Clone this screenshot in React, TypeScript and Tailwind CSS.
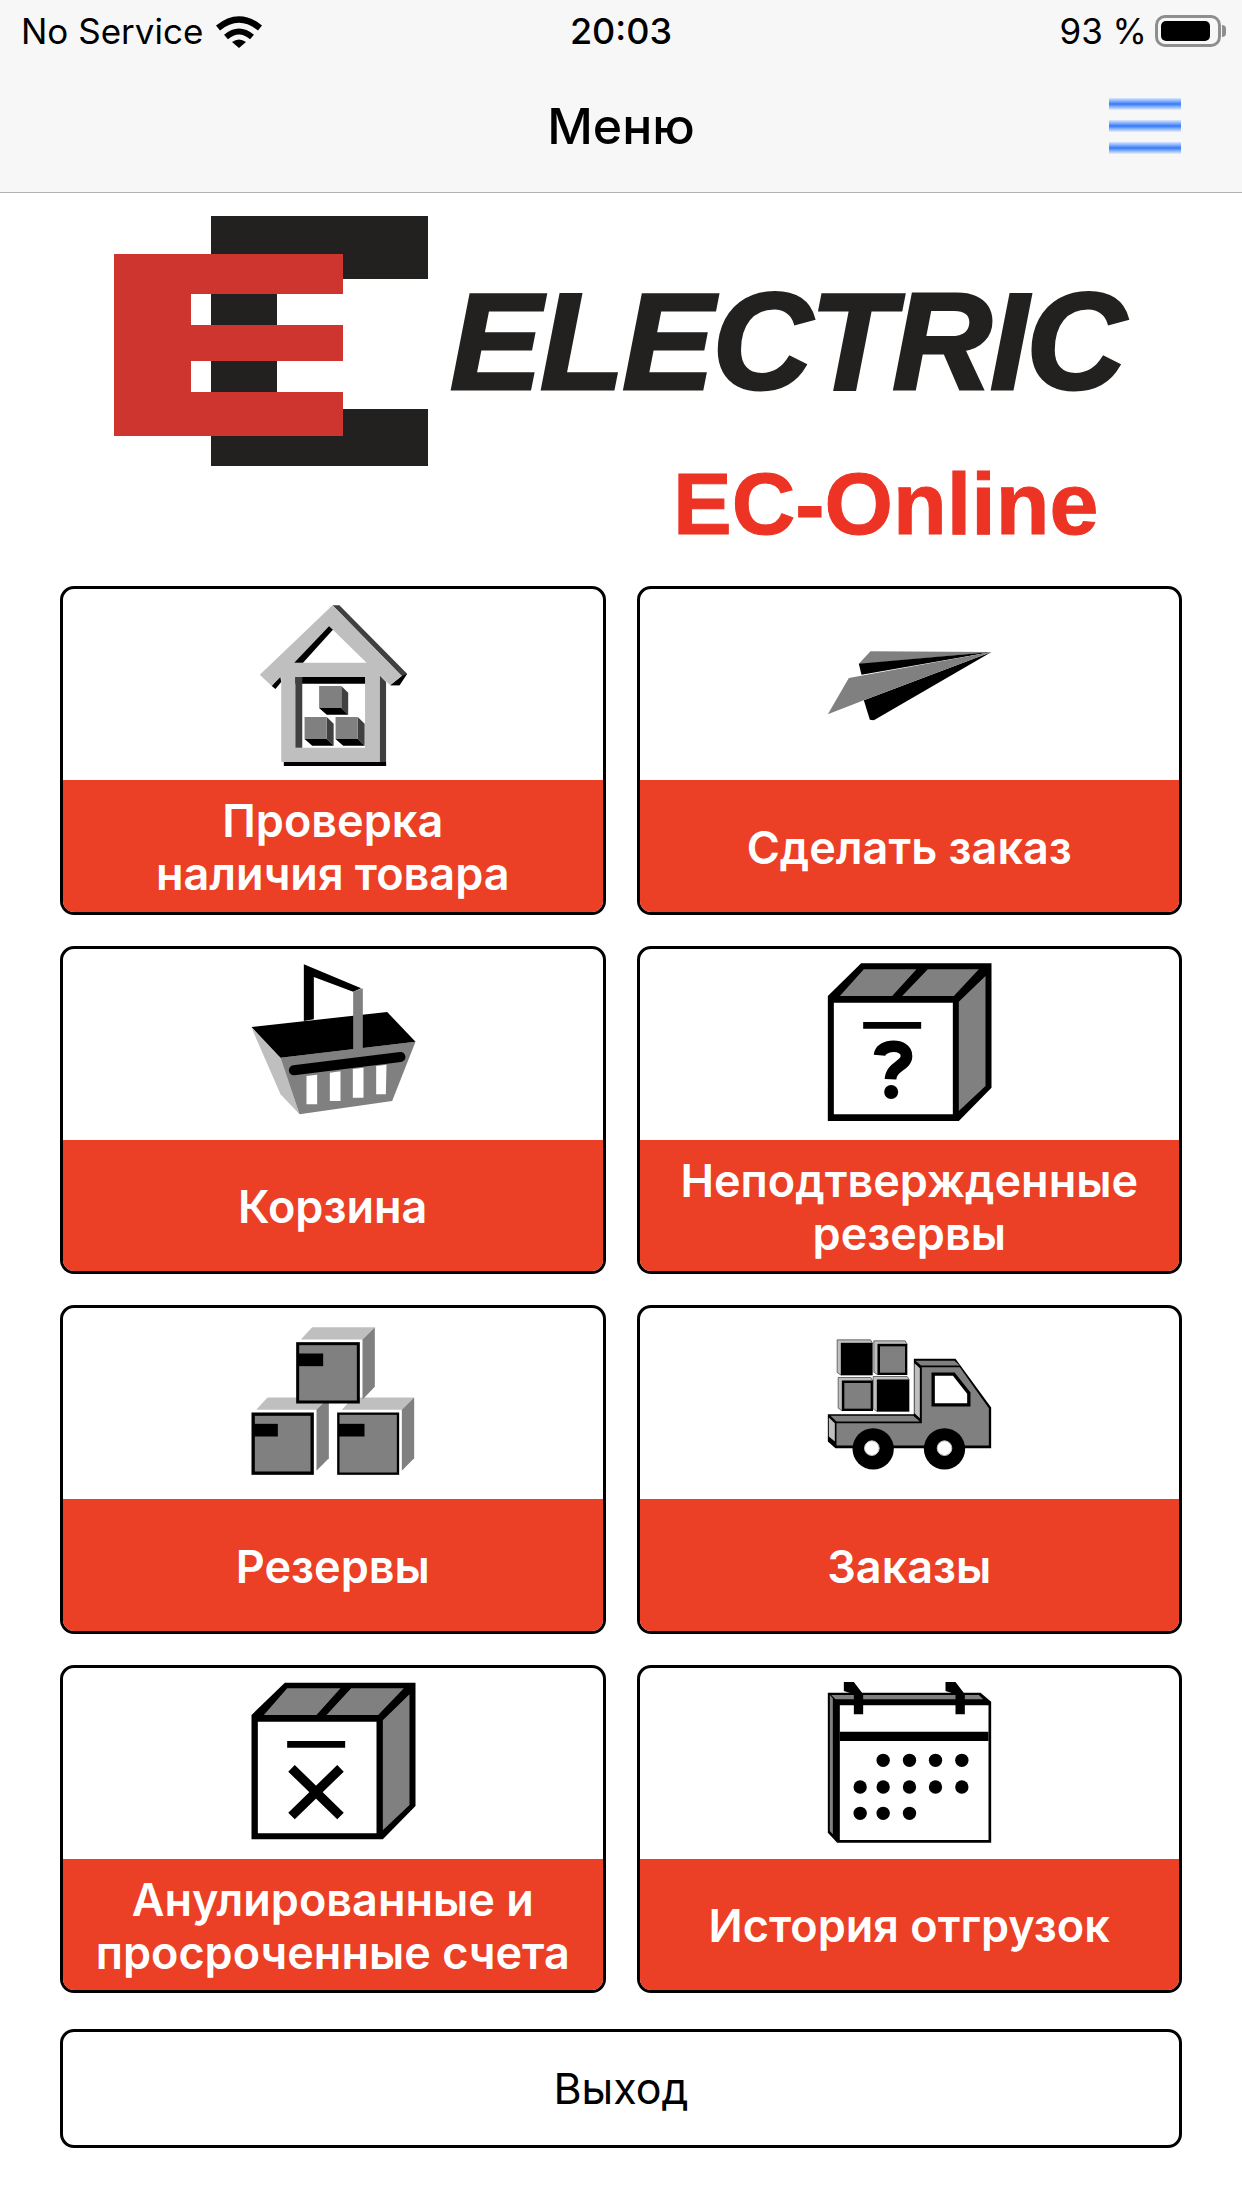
import type { ReactNode } from "react";

const GRAY = "#808080";
const LIGHT = "#bfbfbf";
const DARK = "#404040";

function Wifi() {
  return (
    <svg viewBox="0 0 46 34" className="w-[46px] h-[34px] ml-[13px]">
      <path d="M2 14 Q23 -3 44 14" fill="none" stroke="#000" strokeWidth="6.5" />
      <path d="M10 23 Q23 12 36 23" fill="none" stroke="#000" strokeWidth="6" />
      <path d="M16 28 Q23 23 30 28 L23 34 Z" fill="#000" />
    </svg>
  );
}

function Battery() {
  return (
    <div className="flex items-center ml-[8px]">
      <div className="w-[66px] h-[32px] rounded-[10px] border-[3px] border-[#8e8e8e] p-[3px]">
        <div className="h-full w-[90%] rounded-[5px] bg-black" />
      </div>
      <div className="w-[4px] h-[12px] ml-[1px] rounded-r-full bg-[#8e8e8e]" />
    </div>
  );
}

function LogoMark() {
  return (
    <svg viewBox="114 216 314 250" className="w-[314px] h-[250px] shrink-0">
      <path d="M211 216H428V279H343V294H277V409H428V466H211Z" fill="#22211f" />
      <path d="M114 254H343V294H191V325H343V361H191V392H343V436H114Z" fill="#ce352f" />
    </svg>
  );
}

function IconBox({ viewBox, stretch, children }: { viewBox: string; stretch?: boolean; children: ReactNode }) {
  return (
    <svg viewBox={viewBox} preserveAspectRatio={stretch ? "none" : undefined} className="w-[200px] h-[190px]">
      {children}
    </svg>
  );
}

function Cube({ x, y }: { x: number; y: number }) {
  return (
    <g transform={`translate(${x} ${y})`}>
      <path d="M58 0L76 20V86L58 66Z" fill={DARK} />
      <path d="M0 66H58L76 86H20Z" fill="#000" />
      <path d="M0 0H58V66H0Z" fill={GRAY} />
    </g>
  );
}

function HouseIcon() {
  return (
    <IconBox viewBox="477 39 522.6 570" stretch>
      <path d="M737 85H755L932 290L912 325H888L918 297Z" fill={DARK} />
      <path d="M860 295L877 315V567H610V555H860Z" fill={DARK} />
      <path d="M610 555H877V567H610Z" fill="#000" />
      <path d="M600 295L603 315L588 336L578 327Z" fill="#000" />
      <path d="M932 290L912 325H888L918 297Z" fill="#000" />
      <path
        d="M737 85L918 297L888 325L860 295V555H603V298L578 327L547 293ZM738 158L637 257H826ZM640 300V512H822V300Z"
        fill={LIGHT}
        fillRule="evenodd"
      />
      <path d="M728 148L738 158L660 257H637Z" fill="#000" />
      <path d="M640 300H822V320H640Z" fill="#000" />
      <path d="M640 300H658V512H640Z" fill={DARK} />
      <Cube x={702} y={327} />
      <Cube x={664} y={420} />
      <Cube x={745} y={420} />
    </IconBox>
  );
}

function PlaneIcon() {
  return (
    <IconBox viewBox="85.5 -96 600 570">
      <path d="M270 88L633 90L238 127L235 125Z" fill={GRAY} />
      <path d="M235 125L633 90L243 158Z" fill="#000" />
      <path d="M250 235L633 90L280 295L268 293Z" fill="#000" />
      <path d="M205 168L633 90L250 235L142 277Z" fill={GRAY} />
    </IconBox>
  );
}

function BasketIcon() {
  return (
    <IconBox viewBox="7.5 -6 600 570">
      <path d="M63 230L150 320L207 490L150 430Z" fill={LIGHT} />
      <path d="M150 320L555 272L485 450L207 490Z" fill={GRAY} />
      <path d="M63 228L470 183L555 272L150 320Z" fill="#000" />
      <path d="M220 40L392 112L368 122L250 78V205L220 210Z" fill="#000" />
      <path d="M368 122L397 112V295L368 300Z" fill={GRAY} />
      <path d="M190 358L510 318" stroke="#000" strokeWidth="30" strokeLinecap="round" />
      <path d="M228 375L260 371V460H228ZM298 365L330 361V450H298ZM367 354L399 350V440H367ZM437 345L468 341L466 430H437Z" fill="#fff" />
    </IconBox>
  );
}

function QuestionBoxIcon() {
  return (
    <IconBox viewBox="25.5 -6 600 570">
      <path d="M82 135L182 37H573V410L475 510H82Z" fill="#000" />
      <path d="M100 155H457V490H100Z" fill="#fff" />
      <path d="M118 135L190 55H348L275 135ZM305 135L382 55H535L460 135ZM475 152L555 75V405L475 480Z" fill={GRAY} />
      <path d="M188 213H362V233H188Z" fill="#000" />
      <path d="M237 313C240 278 318 275 318 315C318 345 272 345 270 385" fill="none" stroke="#000" strokeWidth="35" />
      <circle cx="272" cy="423" r="21" fill="#000" />
    </IconBox>
  );
}

function BoxFace({ x, y, w, h, stroke, labelW }: { x: number; y: number; w: number; h: number; stroke: number; labelW: number }) {
  const d = stroke / 2;
  return (
    <g>
      <path d={`M${x + 14} ${y - 8}L${x + 48} ${y - 45}H${x + w + 45}L${x + w + 8} ${y - 8}Z`} fill={LIGHT} />
      <path d={`M${x + w + 8} ${y - 8}L${x + w + 45} ${y - 45}V${y + h - 50}L${x + w + 8} ${y + h - 12}Z`} fill={GRAY} />
      <rect x={x + d} y={y + d} width={w - stroke} height={h - stroke} fill={GRAY} stroke="#000" strokeWidth={stroke} />
      <rect x={x + 5} y={y + 34} width={labelW} height={38} fill="#000" />
    </g>
  );
}

function BoxesIcon() {
  return (
    <IconBox viewBox="7.5 -7.5 600 570">
      <BoxFace x={63} y={303} w={187} h={187} stroke={10} labelW={74} />
      <BoxFace x={320} y={303} w={186} h={187} stroke={7} labelW={77} />
      <BoxFace x={197} y={92} w={191} h={184} stroke={9} labelW={76} />
    </IconBox>
  );
}

function Crate({ x, y, w, h, dark }: { x: number; y: number; w: number; h: number; dark?: boolean }) {
  return (
    <g>
      <path d={`M${x - 12} ${y - 10}H${x + w - 6}L${x + w} ${y}H${x}V${y + h}L${x - 12} ${y + h - 8}Z`} fill={LIGHT} stroke="#333" strokeWidth="2" />
      <rect x={x + 3} y={y + 3} width={w - 6} height={h - 6} fill={dark ? "#000" : GRAY} stroke="#000" strokeWidth="7" />
    </g>
  );
}

function TruckIcon() {
  return (
    <IconBox viewBox="25.5 -37.5 600 570">
      <Crate x={122} y={65} w={94} h={96} dark />
      <Crate x={232} y={68} w={88} h={92} />
      <Crate x={125} y={178} w={92} h={90} />
      <Crate x={230} y={175} w={96} h={95} dark />
      <path d="M82 278H340V112H465L572 258V380H105L82 360Z" fill="#000" />
      <path d="M90 283H338L358 300H108Z" fill={GRAY} />
      <path d="M85 288L103 305V360L85 345Z" fill={LIGHT} />
      <path d="M108 305H364V137H478L565 260V372H108Z" fill={GRAY} />
      <path d="M345 118H462L478 132H362Z" fill={GRAY} />
      <path d="M342 125L358 140V290L342 275Z" fill={LIGHT} />
      <path d="M398 158H460L505 215V250H398Z" fill="#fff" stroke="#000" strokeWidth="10" />
      <circle cx="218" cy="382" r="62" fill="#000" />
      <circle cx="432" cy="382" r="62" fill="#000" />
      <circle cx="214" cy="380" r="22" fill="#fff" stroke={LIGHT} strokeWidth="3" />
      <circle cx="432" cy="380" r="22" fill="#fff" stroke={LIGHT} strokeWidth="3" />
    </IconBox>
  );
}

function CrossBoxIcon() {
  return (
    <IconBox viewBox="7.5 -9 600 570">
      <path d="M63 132L163 35H555V405L457 505H63Z" fill="#000" />
      <path d="M82 152H438V487H82Z" fill="#fff" />
      <path d="M100 132L170 52H330L258 132ZM288 132L362 52H520L443 132ZM457 148L537 70V402L457 478Z" fill={GRAY} />
      <path d="M170 210H344V230H170Z" fill="#000" />
      <path d="M183 292L330 435M330 292L183 435" stroke="#000" strokeWidth="28" />
    </IconBox>
  );
}

function CalendarIcon() {
  const dots = [
    [248, 268], [327, 268], [405, 268], [484, 268],
    [179, 348], [248, 348], [327, 348], [405, 348], [484, 348],
    [179, 427], [248, 427], [327, 427],
  ];
  return (
    <IconBox viewBox="25.5 -9 600 570">
      <path d="M82 65H540L572 92V515H110L82 485Z" fill="#000" />
      <path d="M88 72L97 82V490L88 480ZM92 72H535L548 85H105Z" fill={GRAY} />
      <path d="M118 103H564V507H118Z" fill="#fff" />
      <path d="M118 182H564V210H118Z" fill="#000" />
      <path d="M130 33H160L188 70V130H160V70L130 60ZM435 33H465L493 70V130H465V70L435 60Z" fill="#000" />
      {dots.map(([x, y]) => (
        <circle key={`${x}-${y}`} cx={x} cy={y} r="20" fill="#000" />
      ))}
    </IconBox>
  );
}

const items = [
  { icon: <HouseIcon />, label: ["Проверка", "наличия товара"] },
  { icon: <PlaneIcon />, label: ["Сделать заказ"] },
  { icon: <BasketIcon />, label: ["Корзина"] },
  { icon: <QuestionBoxIcon />, label: ["Неподтвержденные", "резервы"] },
  { icon: <BoxesIcon />, label: ["Резервы"] },
  { icon: <TruckIcon />, label: ["Заказы"] },
  { icon: <CrossBoxIcon />, label: ["Анулированные и", "просроченные счета"] },
  { icon: <CalendarIcon />, label: ["История отгрузок"] },
];

function MenuCard({ icon, label }: { icon: ReactNode; label: string[] }) {
  return (
    <div className="flex flex-col h-[328.5px] overflow-hidden rounded-[14px] border-[3px] border-black bg-white">
      <div className="flex items-center justify-center h-[191px] shrink-0">{icon}</div>
      <div className="flex flex-1 flex-col items-center justify-center pt-[3px] bg-[#eb4026] text-white text-[45px] leading-[53px] font-semibold">
        {label.map((line) => (
          <div key={line} className="whitespace-nowrap">{line}</div>
        ))}
      </div>
    </div>
  );
}

export default function App() {
  return (
    <div className="min-h-[2208px] bg-white text-black [font-family:Inter,sans-serif]">
      <header className="h-[193px] bg-[#f7f7f7] border-b border-[#b2b2b2]">
        <div className="grid grid-cols-[1fr_auto_1fr] items-center h-[62px] px-[21px] text-[35px]">
          <div className="flex items-center">
            <span>No Service</span>
            <Wifi />
          </div>
          <span className="text-[36px] font-medium">20:03</span>
          <div className="flex items-center justify-end -mr-[5px]">
            <span>93 %</span>
            <Battery />
          </div>
        </div>
        <div className="grid grid-cols-[1fr_auto_1fr] items-center h-[130px] pr-[61px] pb-[2px]">
          <div />
          <h1 className="pl-[61px] text-[50px] font-medium">Меню</h1>
          <div className="flex flex-col justify-self-end gap-[10px] w-[72px]">
            <div className="h-[12px] bg-linear-to-b from-[#dbe7fc] via-[#3478f6] to-[#e6effd]" />
            <div className="h-[12px] bg-linear-to-b from-[#dbe7fc] via-[#3478f6] to-[#e6effd]" />
            <div className="h-[12px] bg-linear-to-b from-[#dbe7fc] via-[#3478f6] to-[#e6effd]" />
          </div>
        </div>
      </header>

      <div className="pt-[23px] [font-family:'Liberation_Sans',Arial,sans-serif] font-bold">
        <div className="flex items-center pl-[114px]">
          <LogoMark />
          <div className="ml-[22px] text-[138px] leading-none italic text-[#22211f] tracking-[-2px] [-webkit-text-stroke:3px_#22211f]">ELECTRIC</div>
        </div>
        <div className="-mt-[6px] ml-[673px] text-[88px] leading-none text-[#ec3324] [-webkit-text-stroke:1px_#ec3324]">EC-Online</div>
      </div>

      <main className="px-[60px] pt-[38px]">
        <div className="grid grid-cols-2 gap-x-[31px] gap-y-[31px]">
          {items.map((item) => (
            <MenuCard key={item.label[0]} icon={item.icon} label={item.label} />
          ))}
        </div>
        <button className="flex items-center justify-center w-full h-[119px] mt-[36px] rounded-[14px] border-[3px] border-black text-[43px]">
          Выход
        </button>
      </main>
    </div>
  );
}
